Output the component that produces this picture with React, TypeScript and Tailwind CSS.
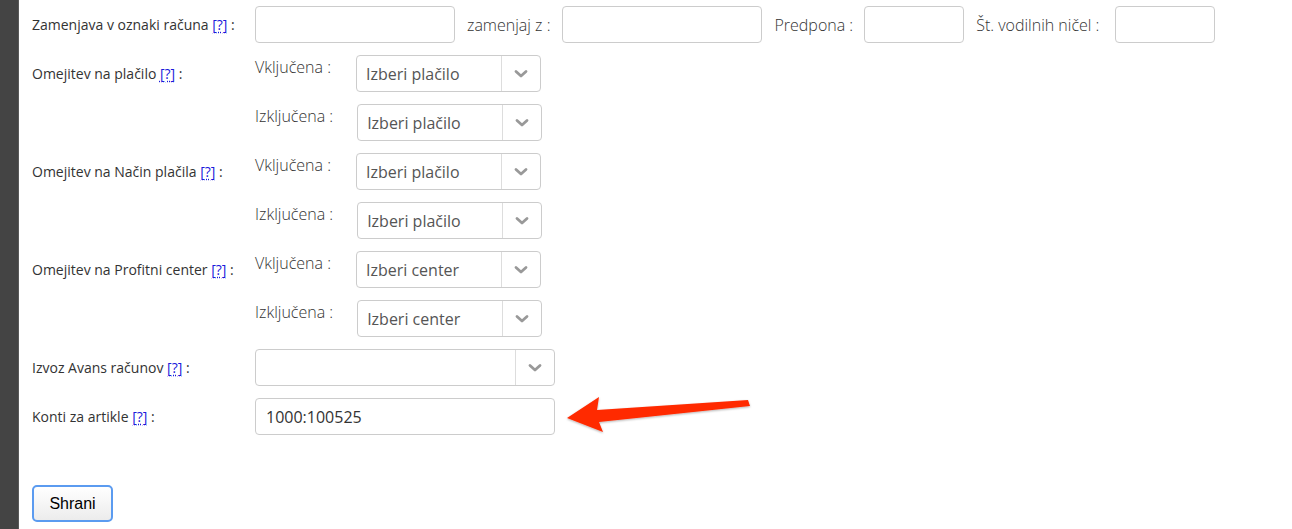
import React from 'react';

const font = { fontFamily: '"Open Sans", "Liberation Sans", sans-serif' };

function Help() {
  return <a className="text-[#1a1adb] underline decoration-dotted underline-offset-2">[?]</a>;
}

function TextBox({ w, value }: { w: string; value?: string }) {
  return (
    <div className={`${w} h-[37px] border border-[#cccccc] rounded-[4px] bg-white flex items-center px-[10px] text-[16px] text-[#333]`}>
      {value}
    </div>
  );
}

function Chevron() {
  return (
    <svg width="14" height="10" viewBox="0 0 14 10">
      <path d="M2 2.5 L7 7 L12 2.5" fill="none" stroke="#999" strokeWidth="2.8" strokeLinecap="round" strokeLinejoin="round" />
    </svg>
  );
}

function Select({ w, text }: { w: string; text?: string }) {
  return (
    <div className={`${w} h-[37px] border border-[#cccccc] rounded-[4px] bg-white flex items-stretch`}>
      <div className="flex-1 flex items-center pl-[9px] text-[16px] text-[#555]">{text}</div>
      <div className="w-[39px] border-l border-[#dddddd] flex items-center justify-center">
        <Chevron />
      </div>
    </div>
  );
}

function SubLabel({ children }: { children: React.ReactNode }) {
  return <div className="text-[16px] font-light text-[#333] self-start leading-[24px]">{children}</div>;
}

function Restriction({ label, placeholder }: { label: string; placeholder: string }) {
  return (
    <div className="flex">
      <div className="w-[223px] h-[37px] flex items-center text-[14px] text-[#333]">
        <span>
          {label} <Help /> :
        </span>
      </div>
      <div className="flex flex-col gap-[12px]">
        <div className="flex">
          <SubLabel>Vključena :</SubLabel>
          <div className="ml-[25px]">
            <Select w="w-[185px]" text={placeholder} />
          </div>
        </div>
        <div className="flex">
          <SubLabel>Izključena :</SubLabel>
          <div className="ml-[24px]">
            <Select w="w-[185px]" text={placeholder} />
          </div>
        </div>
      </div>
    </div>
  );
}

export default function App() {
  return (
    <div className="relative flex w-[1292px] h-[529px] bg-white overflow-hidden" style={font}>
      <div className="w-[19px] bg-[#444444] border-r border-[#5a5a5a] shrink-0" />
      <div className="flex-1 pl-[13px] pt-[6px] flex flex-col gap-[12px]">
        <div className="flex items-center">
          <div className="w-[223px] text-[14px] text-[#333]">
            Zamenjava v oznaki računa <Help /> :
          </div>
          <TextBox w="w-[200px]" />
          <span className="ml-[12px] mr-[12px] text-[16px] font-light text-[#333]">zamenjaj z :</span>
          <TextBox w="w-[200px]" />
          <span className="ml-[12px] mr-[11px] text-[16px] font-light text-[#333]">Predpona :</span>
          <TextBox w="w-[100px]" />
          <span className="ml-[12px] mr-[16px] text-[16px] font-light text-[#333]">Št. vodilnih ničel :</span>
          <TextBox w="w-[100px]" />
        </div>
        <Restriction label="Omejitev na plačilo" placeholder="Izberi plačilo" />
        <Restriction label="Omejitev na Način plačila" placeholder="Izberi plačilo" />
        <Restriction label="Omejitev na Profitni center" placeholder="Izberi center" />
        <div className="flex items-center">
          <div className="w-[223px] text-[14px] text-[#333]">
            Izvoz Avans računov <Help /> :
          </div>
          <Select w="w-[300px]" />
        </div>
        <div className="flex items-center">
          <div className="w-[223px] text-[14px] text-[#333]">
            Konti za artikle <Help /> :
          </div>
          <TextBox w="w-[300px]" value="1000:100525" />
        </div>
        <div className="mt-[38px]">
          <button
            className="w-[81px] h-[37px] rounded-[5px] border-2 border-[#5b9bf0] bg-gradient-to-b from-white to-[#ececec] text-[16px] text-black"
            style={{ fontFamily: '"Liberation Sans", Arial, sans-serif' }}
          >
            Shrani
          </button>
        </div>
      </div>
      <svg className="absolute left-[560px] top-[390px]" width="200" height="50" viewBox="560 390 200 50">
        <defs>
          <filter id="sh" x="-10%" y="-30%" width="120%" height="160%">
            <feDropShadow dx="0" dy="1" stdDeviation="1" floodColor="#000" floodOpacity="0.3" />
          </filter>
        </defs>
        <polygon
          points="567,418 599,397 597,410 748,400 750,406 599,422 603,432"
          fill="#ff2a00"
          filter="url(#sh)"
        />
      </svg>
    </div>
  );
}
